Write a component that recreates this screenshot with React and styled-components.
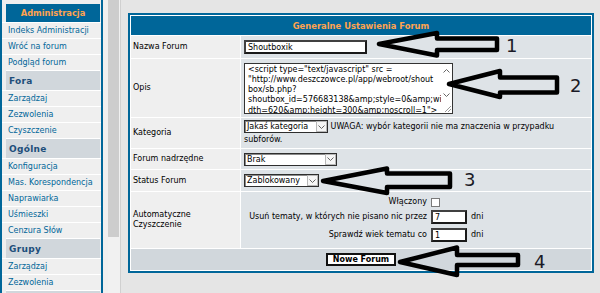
import React from 'react';
import styled, { createGlobalStyle } from 'styled-components';

const Global = createGlobalStyle`
  html, body { margin: 0; padding: 0; width: 600px; height: 293px; overflow: hidden; background: #e5e5e5; }
  body { font-family: "DejaVu Sans", Verdana, sans-serif; font-size: 8px; color: #000; }
  * { box-sizing: border-box; }
`;

const Page = styled.div`
  position: relative;
  display: flex;
  width: 600px;
  height: 293px;
  overflow: hidden;
`;

const LeftFrame = styled.div`
  flex: none;
  display: flex;
  width: 121px;
  height: 100%;
  background: #efefef;
  border-right: 1px solid #d0d0d0;
`;

const NavArea = styled.div`
  width: 108px;
  overflow: hidden;
`;

const Nav = styled.nav`
  width: 103px;
  padding-top: 4px;
  border-left: 2px solid #006699;
  border-right: 2px solid #006699;
  background: #efefef;
  display: flex;
  flex-direction: column;
`;

const NavHead = styled.div`
  height: 18px;
  margin: 0 1px 0 4px;
  background: #006699;
  color: #ffa34f;
  font-weight: bold;
  font-size: 8.3px;
  display: flex;
  align-items: center;
  justify-content: center;
`;

const NavItem = styled.a`
  height: 16px;
  border-top: 1px solid #fff;
  padding-left: 6px;
  display: flex;
  align-items: center;
  background: #efefef;
  color: #006699;
  text-decoration: none;
  font-size: 8px;
  white-space: nowrap;
`;

const NavCat = styled.div`
  height: 20px;
  border-top: 1px solid #fff;
  margin: 0 1px 0 4px;
  padding-left: 3px;
  display: flex;
  align-items: center;
  background: #d1d7dc;
  color: #1d4e7a;
  font-weight: bold;
  font-size: 9px;
  letter-spacing: 0.3px;
`;

const ScrollTrack = styled.div`
  width: 12px;
  background: #f1f1f1;
`;

const ScrollThumb = styled.div`
  width: 11px;
  height: 237px;
  background: #cdcdcd;
`;

const Main = styled.main`
  flex: 1;
  background: #e5e5e5;
  padding: 13px 6px 0 7px;
`;

const Form = styled.div`
  width: 466px;
  display: grid;
  grid-template-columns: 109px 350px;
  grid-template-rows: 19px 22px 58px 30px 20px 21px 56px 21px;
  gap: 1px;
  padding: 1px;
  background: #fff;
  border: 2px solid #006699;
`;

const FormHead = styled.div`
  grid-column: 1 / -1;
  background: #006699;
  color: #ffa34f;
  font-weight: bold;
  font-size: 8.4px;
  display: flex;
  align-items: center;
  justify-content: center;
`;

const Label = styled.div`
  background: #efefef;
  padding-left: 2px;
  display: flex;
  align-items: center;
  line-height: 10px;
`;

const Value = styled.div`
  background: #dee3e7;
  padding: ${p => (p.$top ? '3px 3px 0' : '0 3px')};
  display: flex;
  align-items: ${p => (p.$top ? 'flex-start' : 'center')};
  line-height: 13px;
`;

const Inline = styled.div`
  line-height: 13px;
`;

const FormFoot = styled.div`
  grid-column: 1 / -1;
  background: #d1d7dc;
  display: flex;
  align-items: center;
  justify-content: center;
`;

const TextInput = styled.input`
  width: ${p => p.$w}px;
  height: 14px;
  margin: 0;
  padding: 0 2px;
  border: 2px solid;
  border-color: #404040 #1a1a1a #1a1a1a #404040;
  background: #fff;
  color: #000;
  font-family: "DejaVu Sans", Verdana, sans-serif;
  font-size: 8px;
  outline: none;
`;

const TextBox = styled.div`
  display: flex;
  width: 209px;
  height: 51px;
  border: 1px solid #333;
  background: #fff;
`;

const Area = styled.textarea`
  flex: 1;
  margin: 0;
  padding: 1px 0 0 3px;
  border: 0;
  resize: none;
  overflow: hidden;
  white-space: pre;
  outline: none;
  background: #fff;
  color: #000;
  font-family: "DejaVu Sans", Verdana, sans-serif;
  font-size: 8px;
  line-height: 10.25px;
`;

const VScroll = styled.div`
  width: 11px;
  display: flex;
  flex-direction: column;
`;

const ScrollBtn = styled.div`
  height: 14px;
  display: flex;
  align-items: center;
  justify-content: center;
`;

const ScrollGap = styled.div`
  flex: 1;
`;

const Grip = styled.div`
  height: 11px;
  display: flex;
  align-items: flex-end;
  justify-content: flex-end;
`;

const Select = styled.span`
  display: inline-flex;
  align-items: center;
  vertical-align: middle;
  width: ${p => p.$w}px;
  height: 13px;
  padding-left: 2px;
  border: 1px solid #2e2e2e;
  box-shadow: inset 1px 1px 0 #8a8a8a;
  background: #fff;
  font-size: 8px;
  line-height: 11px;
`;

const SelText = styled.span`
  flex: 1;
  white-space: nowrap;
`;

const SelBtn = styled.span`
  width: 11px;
  height: 11px;
  border: 1px solid #b8b8b8;
  background: #f6f6f6;
  display: flex;
  align-items: center;
  justify-content: center;
`;

const CleanGrid = styled.div`
  display: grid;
  grid-template-columns: 183px 36px auto;
  grid-template-rows: 14px 15px 18px;
  column-gap: 4px;
  align-items: end;
  line-height: 14px;
`;

const CleanLabel = styled.span`
  justify-self: end;
  align-self: ${p => (p.$mid ? 'center' : 'end')};
  white-space: nowrap;
`;

const CleanUnit = styled.span`
  white-space: nowrap;
`;

const Check = styled.input`
  appearance: none;
  align-self: center;
  width: 9px;
  height: 9px;
  margin: 0;
  border: 1px solid #7a7a7a;
  background: #fff;
`;

const Button = styled.button`
  height: 13px;
  margin: 0;
  padding: 0 5px;
  border: 2px solid #111;
  background: #fff;
  color: #000;
  font-family: "DejaVu Sans", Verdana, sans-serif;
  font-weight: bold;
  font-size: 8px;
  line-height: 9px;
`;

const Overlay = styled.svg`
  position: absolute;
  left: 0;
  top: 0;
  width: 600px;
  height: 293px;
  pointer-events: none;
`;

const Num = styled.span`
  position: absolute;
  left: ${p => p.$x}px;
  top: ${p => p.$y}px;
  font-family: "DejaVu Sans", sans-serif;
  font-size: 18px;
  line-height: 18px;
  color: #1a1a26;
`;

const Chevron = ({ up }) => (
  <svg width="7" height="4" viewBox="0 0 7 4">
    <polyline
      points={up ? '0.5,3.5 3.5,0.5 6.5,3.5' : '0.5,0.5 3.5,3.5 6.5,0.5'}
      fill="none"
      stroke="#666"
      strokeWidth="1"
    />
  </svg>
);

const Drop = ({ w, children }) => (
  <Select $w={w}>
    <SelText>{children}</SelText>
    <SelBtn>
      <Chevron />
    </SelBtn>
  </Select>
);

const nav = [
  { t: 'head', l: 'Administracja' },
  { l: 'Indeks Administracji' },
  { l: 'Wróć na forum' },
  { l: 'Podgląd forum' },
  { t: 'cat', l: 'Fora' },
  { l: 'Zarządzaj' },
  { l: 'Zezwolenia' },
  { l: 'Czyszczenie' },
  { t: 'cat', l: 'Ogólne' },
  { l: 'Konfiguracja' },
  { l: 'Mas. Korespondencja' },
  { l: 'Naprawiarka' },
  { l: 'Uśmieszki' },
  { l: 'Cenzura Słów' },
  { t: 'cat', l: 'Grupy' },
  { l: 'Zarządzaj' },
  { l: 'Zezwolenia' },
  { t: 'cat', l: '' },
];

const opis =
  '<script type="text/javascript" src =\n' +
  '"http://www.deszczowce.pl/app/webroot/shout\n' +
  'box/sb.php?\n' +
  'shoutbox_id=576683138&amp;style=0&amp;wi\n' +
  'dth=620&amp;height=300&amp;noscroll=1">';

const arrows = [
  '379,44 437,33 437,38.5 497,38.5 497,50 437,50 437,55.5',
  '449,84 500,71 500,77.5 557,77.5 557,92.5 500,92.5 500,97',
  '323,181 387,168.5 387,173.5 450,173.5 450,187 387,187 387,193',
  '400,262 457,247.5 457,255 518,255 518,265 457,265 457,275',
];

const nums = [
  { n: '1', x: 506, y: 37 },
  { n: '2', x: 570, y: 77 },
  { n: '3', x: 464, y: 171 },
  { n: '4', x: 534, y: 253 },
];

export default function App() {
  return (
    <>
      <Global />
      <Page>
        <LeftFrame>
          <NavArea>
            <Nav>
              {nav.map((it, i) =>
                it.t === 'head' ? (
                  <NavHead key={i}>{it.l}</NavHead>
                ) : it.t === 'cat' ? (
                  <NavCat key={i}>{it.l}</NavCat>
                ) : (
                  <NavItem key={i} href="#">{it.l}</NavItem>
                )
              )}
            </Nav>
          </NavArea>
          <ScrollTrack>
            <ScrollThumb />
          </ScrollTrack>
        </LeftFrame>
        <Main>
          <Form>
            <FormHead>Generalne Ustawienia Forum</FormHead>

            <Label>Nazwa Forum</Label>
            <Value>
              <TextInput $w={123} defaultValue="Shoutboxik" />
            </Value>

            <Label>Opis</Label>
            <Value>
              <TextBox>
                <Area readOnly value={opis} />
                <VScroll>
                  <ScrollBtn><Chevron up /></ScrollBtn>
                  <ScrollGap />
                  <ScrollBtn><Chevron /></ScrollBtn>
                  <Grip>
                    <svg width="9" height="9" viewBox="0 0 9 9">
                      <line x1="2" y1="8" x2="8" y2="2" stroke="#999" strokeWidth="1" />
                      <line x1="5" y1="8" x2="8" y2="5" stroke="#999" strokeWidth="1" />
                    </svg>
                  </Grip>
                </VScroll>
              </TextBox>
            </Value>

            <Label>Kategoria</Label>
            <Value>
              <Inline>
                <Drop w={84}>Jakaś kategoria</Drop> UWAGA: wybór kategorii nie ma znaczenia w przypadku
                <br />
                subforów.
              </Inline>
            </Value>

            <Label>Forum nadrzędne</Label>
            <Value>
              <Drop w={93}>Brak</Drop>
            </Value>

            <Label>Status Forum</Label>
            <Value>
              <Drop w={75}>Zablokowany</Drop>
            </Value>

            <Label>
              Automatyczne
              <br />
              Czyszczenie
            </Label>
            <Value $top>
              <CleanGrid>
                <CleanLabel $mid>Włączony</CleanLabel>
                <Check type="checkbox" />
                <span />
                <CleanLabel>Usuń tematy, w których nie pisano nic przez</CleanLabel>
                <TextInput $w={36} defaultValue="7" />
                <CleanUnit>dni</CleanUnit>
                <CleanLabel>Sprawdź wiek tematu co</CleanLabel>
                <TextInput $w={36} defaultValue="1" />
                <CleanUnit>dni</CleanUnit>
              </CleanGrid>
            </Value>

            <FormFoot>
              <Button type="button">Nowe Forum</Button>
            </FormFoot>
          </Form>
        </Main>

        <Overlay viewBox="0 0 600 293">
          {arrows.map((p, i) => (
            <polygon
              key={i}
              points={p}
              fill="none"
              stroke="#000"
              strokeWidth="4.5"
              strokeLinejoin="round"
            />
          ))}
        </Overlay>
        {nums.map(d => (
          <Num key={d.n} $x={d.x} $y={d.y}>{d.n}</Num>
        ))}
      </Page>
    </>
  );
}
